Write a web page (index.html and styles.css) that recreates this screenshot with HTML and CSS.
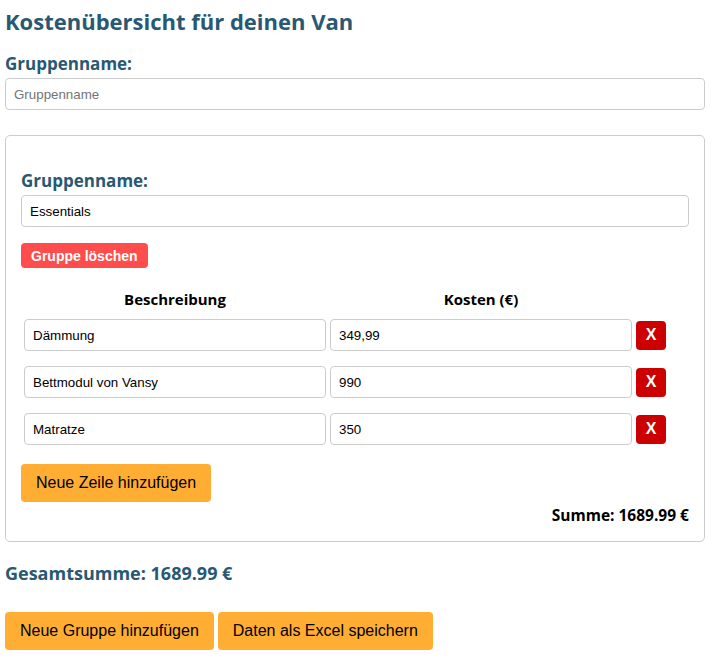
FILE: index.html
```html
<!DOCTYPE html>
<html lang="de">
<head>
    <meta charset="UTF-8">
    <meta name="viewport" content="width=device-width, initial-scale=1.0">
    <title>Kostenübersicht</title>
    <link rel="stylesheet" href="styles.css">
</head>
<body>

<div class="container">
    <h2>Kostenübersicht für deinen Van</h2>

    <h3>Gruppenname:</h3>
    <input type="text" class="text-input" placeholder="Gruppenname">

    <div class="group">
        <h3>Gruppenname:</h3>
        <input type="text" class="text-input" value="Essentials">
        <button class="btn-delete-group">Gruppe löschen</button>

        <table class="cost-table">
            <thead>
                <tr>
                    <th>Beschreibung</th>
                    <th>Kosten (€)</th>
                    <th></th>
                </tr>
            </thead>
            <tbody>
                <tr>
                    <td><input type="text" class="text-input" value="Dämmung"></td>
                    <td><input type="text" class="text-input" value="349,99"></td>
                    <td><button class="btn-remove">X</button></td>
                </tr>
                <tr>
                    <td><input type="text" class="text-input" value="Bettmodul von Vansy"></td>
                    <td><input type="text" class="text-input" value="990"></td>
                    <td><button class="btn-remove">X</button></td>
                </tr>
                <tr>
                    <td><input type="text" class="text-input" value="Matratze"></td>
                    <td><input type="text" class="text-input" value="350"></td>
                    <td><button class="btn-remove">X</button></td>
                </tr>
            </tbody>
        </table>

        <button class="btn">Neue Zeile hinzufügen</button>
        <div class="group-sum">Summe: 1689.99 €</div>
    </div>

    <h3 class="total">Gesamtsumme: 1689.99 €</h3>

    <div class="actions">
        <button class="btn">Neue Gruppe hinzufügen</button>
        <button class="btn">Daten als Excel speichern</button>
    </div>
</div>

</body>
</html>
```

FILE: styles.css
```css
body {
    margin: 5px;
    font-family: "Liberation Sans", Arial, sans-serif;
}
.container {
    width: 700px;
}
h2, h3, th, .group-sum {
    font-family: "Open Sans", Lato, sans-serif;
}
h2 {
    color: #295872;
    font-size: 22px;
    line-height: 28px;
    margin: 2px 0 18px;
}
h3 {
    color: #295872;
    font-size: 17px;
    line-height: 22px;
    margin: 0 0 3px;
}
.text-input {
    display: block;
    width: 100%;
    height: 32px;
    padding: 0 8px;
    box-sizing: border-box;
    border: 1px solid #ccc;
    border-radius: 4px;
    font-family: "Liberation Sans", Arial, sans-serif;
    font-size: 13.33px;
    color: #000;
}
.text-input::placeholder {
    color: #757575;
}
.group {
    margin-top: 25px;
    padding: 15px;
    border: 1px solid #ccc;
    border-radius: 5px;
}
.group h3 {
    margin-top: 19px;
}
.btn-delete-group {
    display: block;
    margin-top: 16px;
    height: 25px;
    padding: 0 10px;
    background-color: #ff4d4d;
    color: white;
    border: none;
    border-radius: 4px;
    font-family: "Liberation Sans", Arial, sans-serif;
    font-size: 14px;
    font-weight: bold;
}
.cost-table {
    margin: 20px 0 4px;
    border-spacing: 2px 0;
}
.cost-table th {
    font-size: 15px;
    line-height: 20px;
    padding: 1px 0 10px;
}
.cost-table td {
    padding: 0 1px 15px;
}
.cost-table td:first-child .text-input,
.cost-table td:nth-child(2) .text-input {
    width: 302px;
}
.btn-remove {
    display: block;
    width: 30px;
    height: 29px;
    padding: 0;
    background-color: #cc0000;
    color: white;
    border: none;
    border-radius: 4px;
    font-family: "Liberation Sans", Arial, sans-serif;
    font-size: 16px;
    font-weight: bold;
}
.btn {
    height: 38px;
    padding: 0 15px;
    background-color: #ffad33;
    color: #000;
    border: none;
    border-radius: 4px;
    font-family: "Liberation Sans", Arial, sans-serif;
    font-size: 16px;
}
.group-sum {
    text-align: right;
    font-weight: bold;
    font-size: 15.5px;
    line-height: 20px;
    margin: 3px 0 1px;
}
.total {
    font-size: 18px;
    margin: 20px 0 28px;
}
.actions {
    display: flex;
    gap: 4px;
}
```
